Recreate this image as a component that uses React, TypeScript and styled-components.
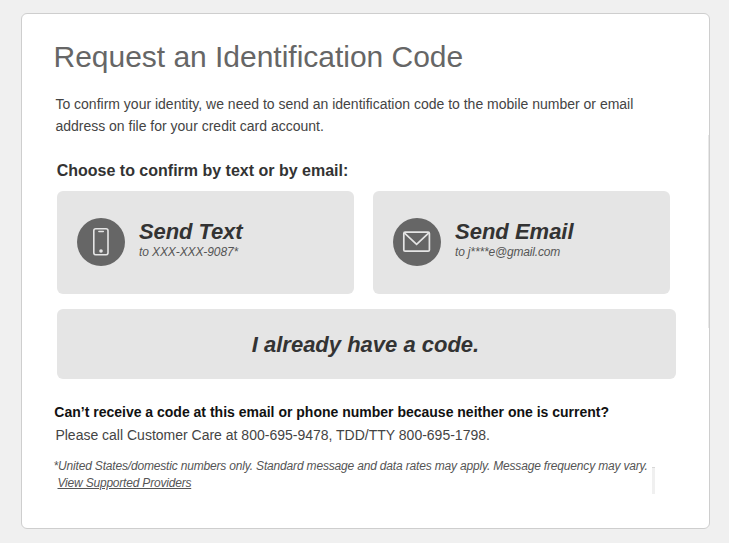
import React from "react";
import styled, { createGlobalStyle } from "styled-components";

const GlobalStyle = createGlobalStyle`
  * { box-sizing: border-box; }
  body {
    margin: 0;
    background: #f0f0f0;
    font-family: "Liberation Sans", Arial, Helvetica, sans-serif;
    color: #333;
  }
`;

const Page = styled.div`
  height: 543px;
  padding: 13px 0 0 21px;
  overflow: hidden;
`;

const Card = styled.main`
  position: relative;
  width: 689px;
  height: 516px;
  padding: 25px 32px 0;
  background: #fff;
  border: 1px solid #cecece;
  border-radius: 6px;
  white-space: nowrap;
`;

const Title = styled.h1`
  margin: 0 0 18px -0.5px;
  font-size: 30px;
  line-height: 36px;
  font-weight: 400;
  letter-spacing: -0.02px;
  color: #666;
`;

const Intro = styled.p`
  margin: 0 0 24px 1.4px;
  font-size: 14px;
  line-height: 22px;
  color: #444;
`;

const Prompt = styled.h2`
  margin: 0 0 10px 2.7px;
  font-size: 16px;
  line-height: 20px;
  font-weight: 700;
`;

const Choices = styled.div`
  display: grid;
  grid-template-columns: 297px 297px;
  column-gap: 19px;
  margin: 0 0 15px 3px;
`;

const Choice = styled.button`
  display: flex;
  align-items: flex-start;
  gap: 14px;
  height: 103px;
  padding: 27px 0 0 20px;
  border: 0;
  border-radius: 6px;
  background: #e5e5e5;
  color: #333;
  font: inherit;
  text-align: left;
`;

const IconDisc = styled.span`
  display: flex;
  flex: none;
  width: 48px;
  height: 48px;
  border-radius: 50%;
  background: #666;
`;

const ChoiceTitle = styled.span<{ $tracking: number }>`
  display: block;
  padding-top: 1px;
  font-size: 22px;
  line-height: 25px;
  font-style: italic;
  font-weight: 700;
  letter-spacing: ${(p) => p.$tracking}px;
`;

const ChoiceDetail = styled.span<{ $tracking: number }>`
  display: block;
  font-size: 12px;
  line-height: 16px;
  font-style: italic;
  color: #555;
  letter-spacing: ${(p) => p.$tracking}px;
`;

const CodeButton = styled.button`
  display: block;
  width: 619px;
  height: 70px;
  margin: 0 0 23px 3px;
  padding: 2px 2px 0 0;
  border: 0;
  border-radius: 6px;
  background: #e5e5e5;
  color: #333;
  font: italic 700 22px/26px "Liberation Sans", Arial, sans-serif;
`;

const HelpTitle = styled.h3`
  margin: 0 0 3px 0.3px;
  font-size: 14px;
  line-height: 20px;
  font-weight: 700;
  color: #111;
`;

const HelpText = styled.p`
  margin: 0 0 13px 1.4px;
  font-size: 14px;
  line-height: 20px;
  color: #444;
`;

const FinePrint = styled.p`
  margin: 0 0 0 -0.5px;
  font-size: 12px;
  line-height: 17px;
  font-style: italic;
  letter-spacing: -0.174px;
  color: #555;
`;

const ProvidersLink = styled.a`
  display: inline-block;
  margin-left: 4px;
  color: #555;
  letter-spacing: -0.2px;
  text-decoration: underline;
  text-underline-offset: 1px;
`;

const EdgeLine = styled.div`
  position: absolute;
  top: 121px;
  right: 0;
  width: 1px;
  height: 193px;
  background: #e8e8e8;
`;

const ResizeMark = styled.div`
  position: absolute;
  top: 453px;
  left: 630px;
  width: 3px;
  height: 27px;
  background: #f0f0f0;
  border-top: 1px solid #d8d8d8;
`;

const PhoneIcon = () => (
  <svg width="48" height="48" viewBox="0 0 48 48" fill="none" stroke="#e5e5e5">
    <rect x="16.8" y="10.7" width="14.2" height="26" rx="2" strokeWidth="1.6" />
    <path d="M21.9 13.5h4.4" strokeWidth="1.5" strokeLinecap="round" />
    <circle cx="24" cy="33" r="1.8" fill="#e5e5e5" stroke="none" />
  </svg>
);

const EnvelopeIcon = () => (
  <svg width="48" height="48" viewBox="0 0 48 48" fill="none" stroke="#e5e5e5" strokeWidth="1.7">
    <rect x="10.8" y="14.2" width="25.6" height="19" rx="1.3" />
    <path d="M11.3 14.8 23.6 26.3 35.8 14.8" />
  </svg>
);

export default function App() {
  return (
    <>
      <GlobalStyle />
      <Page>
        <Card>
          <Title>Request an Identification Code</Title>
          <Intro>
            To confirm your identity, we need to send an identification code to the mobile number or email
            <br />
            address on file for your credit card account.
          </Intro>
          <Prompt>Choose to confirm by text or by email:</Prompt>
          <Choices>
            <Choice>
              <IconDisc><PhoneIcon /></IconDisc>
              <span>
                <ChoiceTitle $tracking={-0.1}>Send Text</ChoiceTitle>
                <ChoiceDetail $tracking={-0.1}>to XXX-XXX-9087*</ChoiceDetail>
              </span>
            </Choice>
            <Choice>
              <IconDisc><EnvelopeIcon /></IconDisc>
              <span>
                <ChoiceTitle $tracking={0}>Send Email</ChoiceTitle>
                <ChoiceDetail $tracking={-0.16}>to j****e@gmail.com</ChoiceDetail>
              </span>
            </Choice>
          </Choices>
          <CodeButton>I already have a code.</CodeButton>
          <HelpTitle>Can’t receive a code at this email or phone number because neither one is current?</HelpTitle>
          <HelpText>Please call Customer Care at 800-695-9478, TDD/TTY 800-695-1798.</HelpText>
          <FinePrint>
            *United States/domestic numbers only. Standard message and data rates may apply. Message frequency may vary.
            <br />
            <ProvidersLink>View Supported Providers</ProvidersLink>
          </FinePrint>
          <EdgeLine />
          <ResizeMark />
        </Card>
      </Page>
    </>
  );
}
